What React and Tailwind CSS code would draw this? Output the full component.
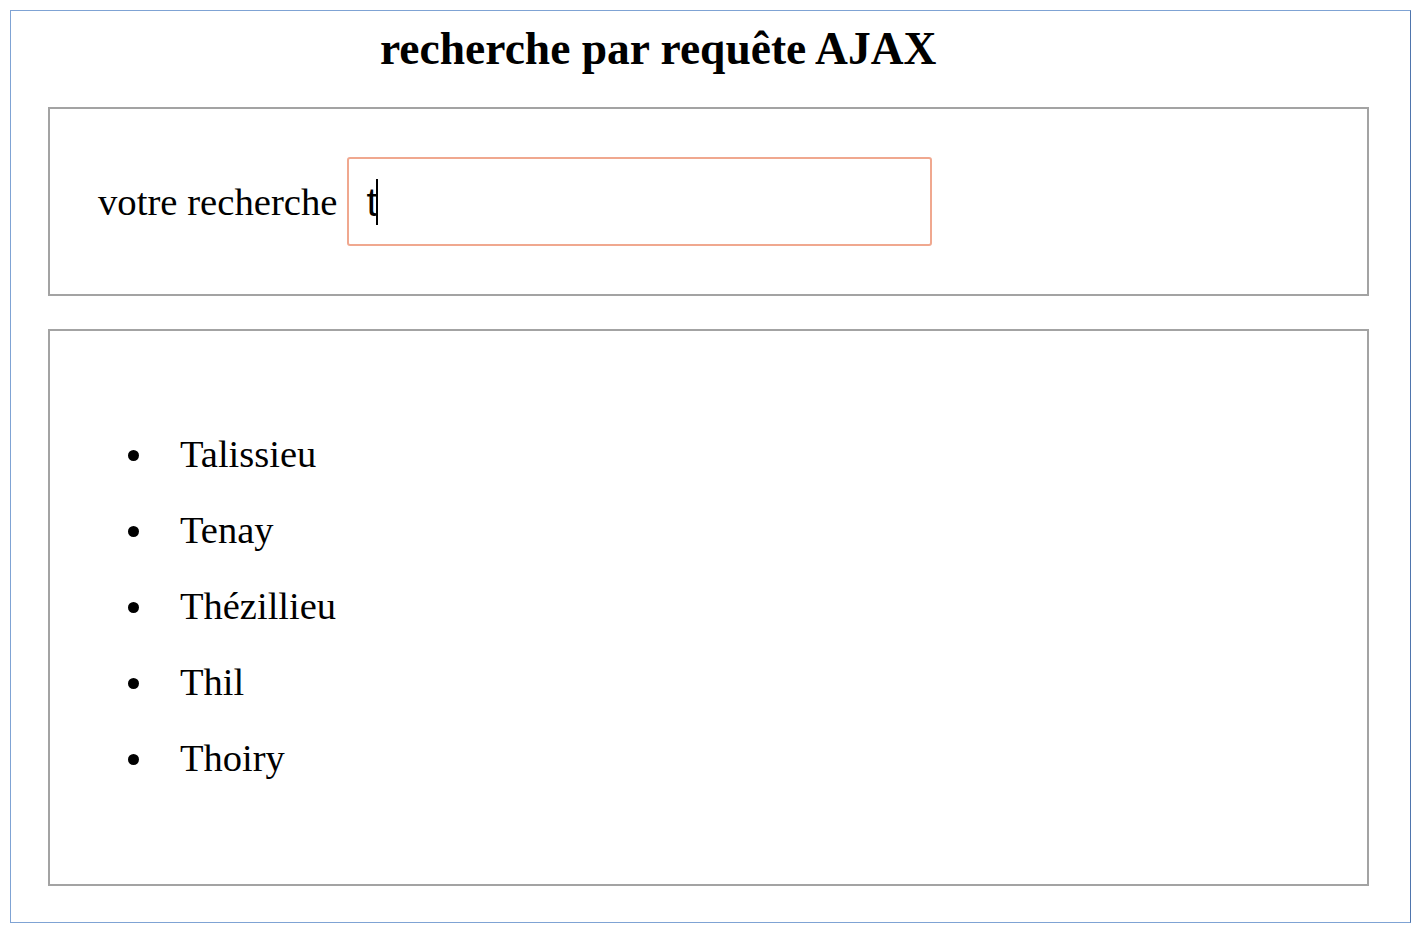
export default function App() {
  const villes = ["Talissieu", "Tenay", "Thézillieu", "Thil", "Thoiry"];

  return (
    <div className="w-[1417px] h-[931px] bg-white pt-[10px] pl-[10px]">
      <div className="w-[1401px] h-[913px] border border-[#7fa3d4] border-r-[#4f75ad] pl-[37px] font-['Liberation_Serif',serif] text-black">
        <h1 className="h-[96px] pt-[18px] pl-[332px] text-[45.5px] leading-[40px] font-bold">
          recherche par requête AJAX
        </h1>

        {/* zone de saisie */}
        <div className="w-[1321px] h-[189px] border-2 border-[#a3a3a3] flex items-center pl-[48px]">
          <label className="text-[38.7px] mr-[10px] mt-[2px]">votre recherche</label>
          <div className="w-[585px] h-[89px] border-2 border-[#f0a88f] rounded-[3px] flex items-center pl-[17px]">
            <span className="font-['Liberation_Sans',sans-serif] text-[40px] leading-none">t</span>
            <span className="w-[2px] h-[46px] bg-black ml-[-2px]"></span>
          </div>
        </div>

        {/* résultats */}
        <div className="w-[1321px] mt-[33px] h-[557px] border-2 border-[#a3a3a3] pt-[85px] pl-[78px]">
          <ul className="text-[38.5px]">
            {villes.map((v) => (
              <li key={v} className="h-[76px] flex items-center">
                <span className="w-[11px] h-[11px] rounded-full bg-black mr-[41px] mt-[2px]"></span>
                <span className="leading-none">{v}</span>
              </li>
            ))}
          </ul>
        </div>
      </div>
    </div>
  );
}
